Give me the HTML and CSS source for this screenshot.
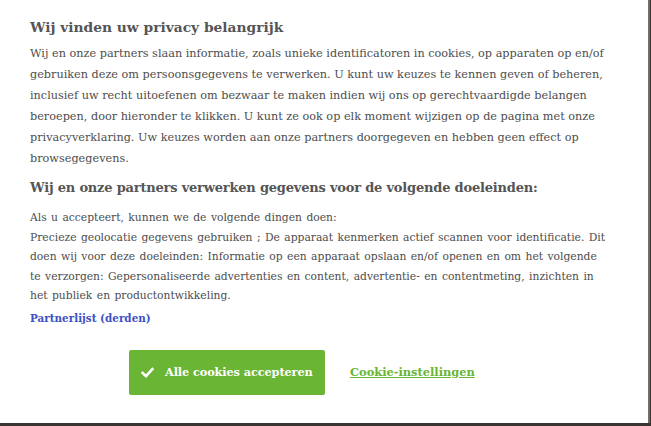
FILE: index.html
```html
<!DOCTYPE html>
<html lang="nl">
<head>
<meta charset="utf-8">
<link rel="stylesheet" href="styles.css">
</head>
<body>
<div class="page">
  <div class="dialog">
    <h1 class="title">Wij vinden uw privacy belangrijk</h1>
    <p class="text">Wij en onze partners slaan informatie, zoals unieke identificatoren in cookies, op apparaten op en/of gebruiken deze om persoonsgegevens te verwerken. U kunt uw keuzes te kennen geven of beheren, inclusief uw recht uitoefenen om bezwaar te maken indien wij ons op gerechtvaardigde belangen beroepen, door hieronder te klikken. U kunt ze ook op elk moment wijzigen op de pagina met onze privacyverklaring. Uw keuzes worden aan onze partners doorgegeven en hebben geen effect op browsegegevens.</p>
    <h2 class="subtitle">Wij en onze partners verwerken gegevens voor de volgende doeleinden:</h2>
    <p class="text small">Als u accepteert, kunnen we de volgende dingen doen:<br>Precieze geolocatie gegevens gebruiken ; De apparaat kenmerken actief scannen voor identificatie. Dit doen wij voor deze doeleinden: Informatie op een apparaat opslaan en/of openen en om het volgende te verzorgen: Gepersonaliseerde advertenties en content, advertentie- en contentmeting, inzichten in het publiek en productontwikkeling.</p>
    <a class="partners" href="#">Partnerlijst (derden)</a>
    <div class="actions">
      <button class="accept" type="button">
        <svg class="check" viewBox="0 0 16 16" width="13" height="13"><path d="M2 8.5 L6.2 12.5 L14 3.8" fill="none" stroke="#fff" stroke-width="3.2" stroke-linecap="square"/></svg>
        <span>Alle cookies accepteren</span>
      </button>
      <a class="settings" href="#">Cookie-instellingen</a>
    </div>
  </div>
</div>
</body>
</html>
```
FILE: styles.css
```css
html, body {
  margin: 0;
  padding: 0;
  width: 651px;
  height: 426px;
  overflow: hidden;
  background: #3a3530;
}
.page {
  display: flex;
  flex-direction: column;
  height: 426px;
}
.dialog {
  box-sizing: border-box;
  width: 650px;
  height: 423px;
  background: #fff;
  border-right: 2px solid #6e6e6e;
  padding: 17px 30px 0 30px;
  font-family: "DejaVu Serif", serif;
  color: #4d4d4d;
}
.title {
  margin: 0 0 6px 0;
  font-size: 13.8px;
  font-weight: bold;
  color: #555;
  line-height: 20px;
}
.text {
  width: 587px;
  margin: 0;
  font-size: 11.25px;
  line-height: 21px;
  color: #4d4d4d;
}
.text.small {
  width: 578.5px;
  font-size: 10.74px;
  word-spacing: 1px;
  line-height: 19.5px;
}
.subtitle {
  margin: 9px 0 10px 0;
  font-size: 13px;
  letter-spacing: -0.2px;
  font-weight: bold;
  color: #555;
  line-height: 20px;
}
.partners {
  display: block;
  margin-top: 3px;
  font-size: 10.4px;
  font-weight: bold;
  color: #3e50c4;
  text-decoration: none;
  line-height: 19px;
}
.actions {
  display: flex;
  align-items: center;
  gap: 25px;
  margin-top: 22px;
  padding-left: 99px;
}
.accept {
  display: flex;
  align-items: center;
  gap: 11px;
  height: 45px;
  width: 196px;
  padding: 0 0 0 12px;
  border: none;
  border-radius: 2px;
  background: #6ab533;
  color: #fff;
  font-family: "DejaVu Serif", serif;
  font-size: 11.3px;
  letter-spacing: -0.1px;
  font-weight: bold;
  white-space: nowrap;
}
.check { flex: none; }
.settings {
  font-size: 11.4px;
  font-weight: bold;
  color: #6ab533;
  text-decoration: underline;
}
```
